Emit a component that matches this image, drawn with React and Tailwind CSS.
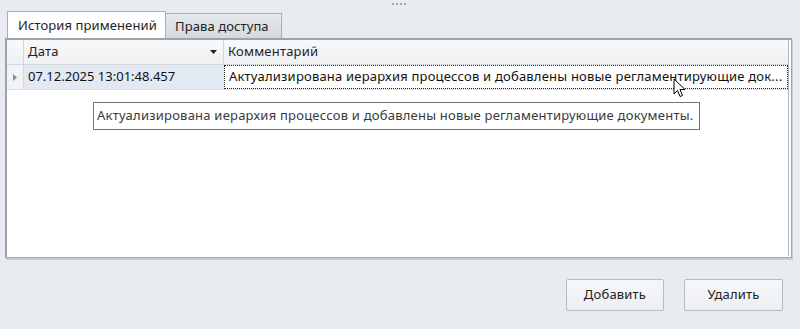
import React from 'react';

const Cursor = () => (
  <svg width="14" height="22" viewBox="0 0 14 22" className="absolute left-[673px] top-[78px]">
    <path d="M1 1 L1 16 L4.5 12.5 L7 18.5 L9.5 17.5 L7 11.5 L12 11.5 Z" fill="#fff" stroke="#000" strokeWidth="1" strokeLinejoin="round" />
  </svg>
);

export default function App() {
  return (
    <div className="relative w-[800px] h-[329px] bg-[#e8ebf0] text-[13px] text-[#1e1e1e] overflow-hidden font-['Noto_Sans','Open_Sans',sans-serif]">
      {/* splitter grip */}
      <div className="h-[11px] flex justify-center">
        <div className="flex gap-[2px] mt-[3px] ml-[-2px]">
          <span className="w-[2px] h-[2px] bg-[#a3a7ad]" />
          <span className="w-[2px] h-[2px] bg-[#a3a7ad]" />
          <span className="w-[2px] h-[2px] bg-[#a3a7ad]" />
          <span className="w-[2px] h-[2px] bg-[#a3a7ad]" />
        </div>
      </div>

      {/* tabs */}
      <div className="flex items-end pl-[7px] h-[27px]">
        <div className="h-[27px] w-[159px] bg-white border border-b-0 border-[#a9adb4] pl-[10px] flex items-center leading-none tracking-[0.1px]">
          История применений
        </div>
        <div className="h-[25px] w-[116px] bg-gradient-to-b from-[#e6e9ed] to-[#d5d8dd] border border-l-0 border-b-0 border-[#a9adb4] pl-[9px] flex items-center leading-none text-[#222] tracking-[0.1px]">
          Права доступа
        </div>
      </div>

      {/* panel with grid */}
      <div className="ml-[5px] w-[787px] h-[220px] border-t-2 border-l-2 border-[#9ea2a9] border-r border-b border-r-[#a3a7ae] border-b-[#a3a7ae] shadow-[1px_2px_0_#c9ccd2] flex flex-col bg-white">
        <div className="flex-1 mr-[2px] mb-[1px] border-r border-[#b4b8be] flex flex-col">
          {/* header */}
          <div className="flex h-[25px] bg-gradient-to-b from-[#f8f9fa] to-[#eef0f2] border-b border-[#d3d6da]">
            <div className="w-[17px] border-r border-[#d3d6da]" />
            <div className="w-[200px] border-r border-[#d3d6da] flex items-center justify-between pl-[4px] pr-[6px]">
              <span className="tracking-[0.2px]">Дата</span>
              <svg width="7" height="4" viewBox="0 0 7 4"><path d="M0 0 H7 L3.5 4 Z" fill="#222" /></svg>
            </div>
            <div className="flex-1 flex items-center pl-[4px] tracking-[0.2px]">Комментарий</div>
          </div>
          {/* data row */}
          <div className="flex h-[25px] border-b border-[#dcdfe3]">
            <div className="w-[17px] border-r border-[#d3d6da] bg-[#f2f3f5] flex items-center justify-center">
              <svg width="4" height="7" viewBox="0 0 4 7"><path d="M0 0 L4 3.5 L0 7 Z" fill="#8d9197" /></svg>
            </div>
            <div className="w-[200px] bg-[#e2e9f3] flex items-center pl-[4px] text-[#111]">
              07.12.2025 13:01:48.457
            </div>
            <div className="flex-1 min-w-0 border border-dotted border-[#222] flex items-center pl-[4px] pr-[4px] bg-white text-[#111]">
              <span className="truncate tracking-[0.2px]">Актуализирована иерархия процессов и добавлены новые регламентирующие док...</span>
            </div>
          </div>
          <div className="flex-1" />
        </div>
      </div>

      {/* buttons */}
      <div className="flex justify-end gap-[20px] pr-[17px] mt-[21px]">
        <button className="w-[98px] h-[32px] rounded-[2px] border border-[#b7bbc2] bg-gradient-to-b from-[#f6f7f9] to-[#eceef1] text-[#222] tracking-[0.2px]">
          Добавить
        </button>
        <button className="w-[99px] h-[32px] rounded-[2px] border border-[#b7bbc2] bg-gradient-to-b from-[#f6f7f9] to-[#eceef1] text-[#222] tracking-[0.2px]">
          Удалить
        </button>
      </div>

      {/* tooltip */}
      <div className="absolute left-[93px] top-[102px] h-[28px] w-[607px] border border-[#767676] bg-white flex items-center pl-[3px] text-[#3a3a3a] whitespace-nowrap tracking-[0.22px]">
        Актуализирована иерархия процессов и добавлены новые регламентирующие документы.
      </div>

      <Cursor />
    </div>
  );
}
